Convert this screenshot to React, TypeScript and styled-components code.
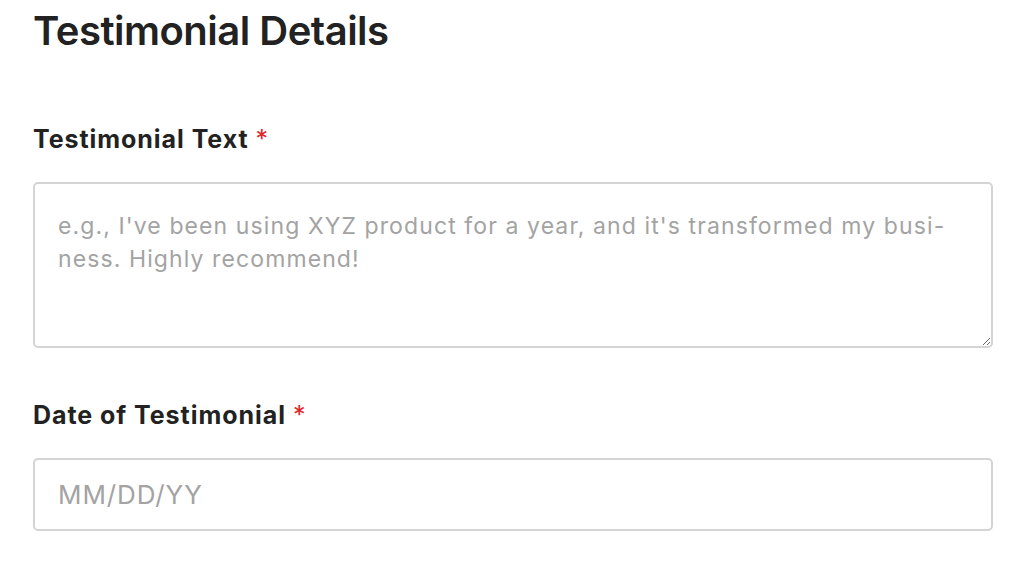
import React from "react";
import styled, { createGlobalStyle } from "styled-components";

const GlobalStyle = createGlobalStyle`
  html, body { margin: 0; padding: 0; background: #ffffff; }
  body { font-family: Inter, "Noto Sans", sans-serif; color: #222222; }
  * { box-sizing: border-box; }
`;

const Page = styled.div`
  width: 1024px;
  height: 577px;
  padding: 7px 31px 0 33px;
  display: flex;
  flex-direction: column;
  overflow: hidden;
`;

const Title = styled.h1`
  margin: 0 0 67px;
  font-size: 40px;
  line-height: 48px;
  font-weight: 600;
  letter-spacing: -0.5px;
  color: #222222;
`;

const Field = styled.div<{ $mb?: number }>`
  display: flex;
  flex-direction: column;
  gap: 26px;
  margin-bottom: ${(p) => p.$mb ?? 0}px;
`;

const Label = styled.label`
  font-size: 25px;
  line-height: 34px;
  font-weight: 700;
  color: #222222;
  letter-spacing: 0.95px;
`;

const Required = styled.span`
  color: #e0252b;
  font-weight: 400;
  margin-left: 7px;
`;

const TextArea = styled.textarea`
  width: 960px;
  height: 166px;
  border: 2px solid #d4d4d4;
  border-radius: 5px;
  padding: 26px 23px;
  font-family: Inter, "Noto Sans", sans-serif;
  font-size: 23px;
  line-height: 33px;
  letter-spacing: 1.1px;
  color: #222;
  resize: vertical;
  outline: none;
  &::placeholder { color: #a3a3a3; }
`;

const Input = styled.input`
  width: 960px;
  height: 73px;
  border: 2px solid #d4d4d4;
  border-radius: 5px;
  padding: 0 23px;
  font-family: Inter, "Noto Sans", sans-serif;
  font-size: 26px;
  letter-spacing: 0.9px;
  color: #222;
  outline: none;
  &::placeholder { color: #a3a3a3; }
`;

export default function App() {
  return (
    <>
      <GlobalStyle />
      <Page>
        <Title>Testimonial Details</Title>
        <Field $mb={50}>
          <Label>
            Testimonial Text<Required>*</Required>
          </Label>
          <TextArea
            placeholder={
              "e.g., I've been using XYZ product for a year, and it's transformed my busi-\nness. Highly recommend!"
            }
          />
        </Field>
        <Field>
          <Label>
            Date of Testimonial<Required>*</Required>
          </Label>
          <Input placeholder="MM/DD/YY" />
        </Field>
      </Page>
    </>
  );
}
